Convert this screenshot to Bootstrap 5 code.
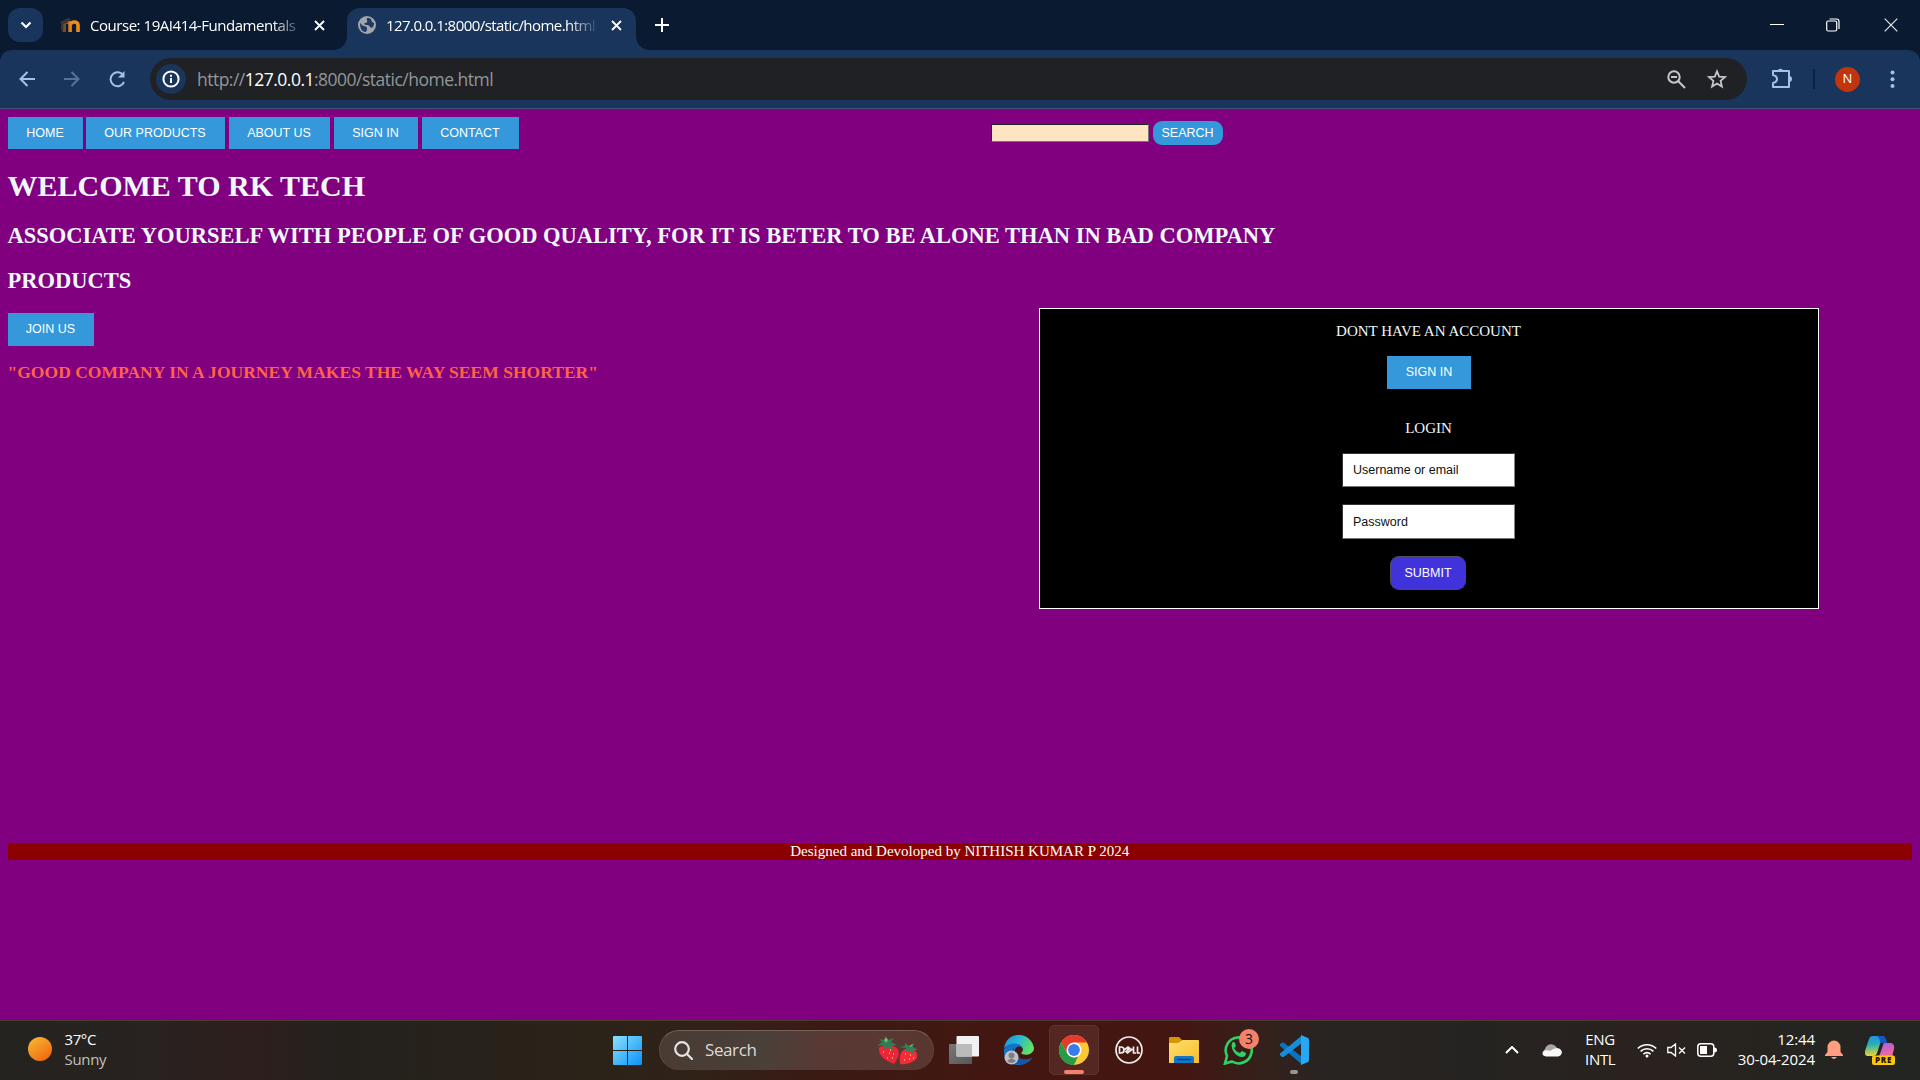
<!DOCTYPE html>
<html lang="en">
<head>
<meta charset="utf-8">
<title>RK Tech</title>
<link href="https://cdn.jsdelivr.net/npm/bootstrap@5.3.0/dist/css/bootstrap.min.css" rel="stylesheet">
<style>
body{width:1920px;height:1080px;overflow:hidden;font-family:"Open Sans","Noto Sans",sans-serif;background:#800080}
svg{display:block;flex:none}
.tabstrip{height:50px;background:#0a1a31;color:#fff;font-size:15px;padding-left:8px}
.tabsearch{width:35px;height:34px;border-radius:12px;background:#1a355b}
.tabtitle{white-space:nowrap;overflow:hidden;line-height:24px}
.t-course{width:208px;margin-left:8px;letter-spacing:-.46px;-webkit-mask-image:linear-gradient(90deg,#000 182px,transparent 215px)}
.t-home{width:210px;margin-left:10px;letter-spacing:-.56px;-webkit-mask-image:linear-gradient(90deg,#000 182px,transparent 213px)}
.tab-live{width:289px;height:42px;margin-left:22px;background:#1a355b;border-radius:13px 13px 0 0;position:relative;padding-left:11px}
.tab-live::before,.tab-live::after{content:"";position:absolute;bottom:0;width:13px;height:13px}
.tab-live::before{left:-13px;background:radial-gradient(circle at 0 0,transparent 12.5px,#1a355b 13px)}
.tab-live::after{right:-13px;background:radial-gradient(circle at 100% 0,transparent 12.5px,#1a355b 13px)}
.toolwrap{background:#0a1a31}
.tools{height:59px;background:#1a355b;border-bottom:1px solid #3b5474;border-radius:12px 12px 0 0}
.omni{width:1597px;height:42px;border-radius:21px;background:#202124;margin-left:24px;padding-left:6px}
.infodot{width:30px;height:30px;background:#1a355b}
.urltext{margin-left:11px;font-size:17.5px;color:#93969a;letter-spacing:-.51px;white-space:nowrap}
.urltext b{font-weight:400;color:#fff}
.avatar{width:25px;height:25px;background:#c1350e;color:#fff;font-size:13px;margin-left:20px}
.site{height:911px;padding:8px 8px 0 7.5px;font-family:"Liberation Serif",serif;color:#f0f8ff;font-size:15px}
.site h1,.site h2,.site h3{font-weight:700;margin:0;white-space:nowrap;line-height:1}
.navline{height:32px}
.sans{font-family:"Liberation Sans",Arial,sans-serif;font-size:12.5px;line-height:14px;color:#fff;white-space:nowrap}
.bluebtn{background:#3498db;border:0;border-radius:0;text-align:center;padding:9px 0}
.findbox{width:158px;height:18px;background:#ffe4c4;border:1px solid;border-color:#222 #767676 #767676 #222;margin:7px 0 0 472px}
.findbtn{width:70px;height:24px;background:#3498db;border-radius:9px;margin-left:4px;border:0;padding:0;line-height:22px}
.loginbox{width:780px;height:301px;background:#000;border:1px solid #fff;margin:-5px 93px 0 0}
.loginbox .cap{line-height:17px}
.field{width:173px;border:1px solid;border-color:#333 #858585 #767676 #333;background:#fff;color:#000;padding:0 10px;display:block;margin-right:1px}
.field::placeholder{color:#111;opacity:1}
.submit{width:76px;height:34px;border-radius:9px;border:1px solid;border-color:#50505c #4133dc #4133dc #50505c;background:#4133dc;padding:0;margin-right:2px}
.credit{background:#8b0000;height:17px;line-height:16px;color:#fff}
.taskbar{height:60px;border-top:1px solid #4a3a32;background:linear-gradient(90deg,#24231f 0,#282220 150px,#2d1f1d 250px,#24211d 340px,#2b2318 600px,#302218 690px,#3b1a14 820px,#431711 1000px,#431612 1180px,#35201b 1260px,#292421 1325px,#252321 1480px,#2a221e 1650px,#252420 1800px,#222522 1920px);color:#fff;font-size:15px;line-height:20px;padding-bottom:1px}
.up{margin-top:-3px}
.weather{padding-left:28px;width:613px}
.findpill{width:275px;height:40px;border-radius:20px;margin-left:17px;padding-left:14px;border:1px solid #70504a;border-color:#76605a #62433d #553c36 #594b42;background:linear-gradient(90deg,#4a3b32,#49403a 35%,#583934 60%,#5b3631);font-size:17px;color:#dedad8}
.running{width:50px;height:50px;background:#552723;border:1px solid #60332e;border-radius:5px;position:relative;margin-left:15px}
.bar{position:absolute;height:4px;border-radius:2px;background:#f4816a}
.note{position:absolute;width:20px;height:20px;background:#f4816a;color:#111;left:16px;top:-6px;font-size:14px}
</style>
<script src="https://cdn.jsdelivr.net/npm/bootstrap@5.3.0/dist/js/bootstrap.bundle.min.js"></script>
</head>
<body>
<header>
<div class="tabstrip d-flex align-items-center position-relative">
  <div class="tabsearch d-flex align-items-center justify-content-center"><svg width="12" height="8" fill="none" stroke="#fff" stroke-width="2.2"><path d="M1.5 1.5 6 6l4.500-4.500"/></svg></div>
  <svg style="margin-left:17px" width="22" height="16" viewBox="0 0 22 16"><defs><linearGradient id="md" gradientUnits="userSpaceOnUse" x1="2" x2="11"><stop stop-color="#4a3630"/><stop offset="1" stop-color="#f08a1d"/></linearGradient></defs><path d="M4 15V8c0-4 6-4 6 0v7M10.500 8c0-4 7.500-4 7.500 0v7" fill="none" stroke="url(#md)" stroke-width="3.600"/><path d="M0 5 8 1l3 1-4 4-4 1v6H1V6z" fill="#3b3434"/></svg>
  <div class="tabtitle t-course">Course: 19AI414-Fundamentals</div>
  <svg style="margin-left:16px" width="11" height="11" stroke="#fff" stroke-width="1.800"><path d="m1 1 9 9m0-9-9 9"/></svg>
  <div class="tab-live d-flex align-items-center align-self-end">
    <div class="d-flex align-items-center" style="margin-top:-8px">
    <svg width="18" height="18" viewBox="0 0 18 18"><circle cx="9" cy="9" r="9" fill="#a1a6ad"/><path d="M2 7c2 1 2 3 4 3s3 1 3 3-1 2-1 3C4 16 2 13 2 7zM9 2c-1 2 1 2 0 4s-2 0-3 2l2 1c2 0 3 0 4 2l2 1c2-2 2-4 2-5l-2-1-1-3-2-1z" fill="#223b60"/></svg>
    <div class="tabtitle t-home">127.0.0.1:8000/static/home.html</div>
    <svg style="margin-left:15px" width="11" height="11" stroke="#fff" stroke-width="1.800"><path d="m1 1 9 9m0-9-9 9"/></svg>
    </div>
  </div>
  <svg style="margin-left:19px" width="14" height="14" stroke="#fff" stroke-width="2"><path d="M7 0v14M0 7h14"/></svg>
  <div class="d-flex align-items-center ms-auto" style="padding-right:22px">
    <svg width="14" height="14" stroke="#fff"><path d="M0 6.500h14"/></svg>
    <svg style="margin-left:42px" width="14" height="14" fill="none" stroke="#fff" stroke-width="1.200"><rect x=".7" y="3" width="10" height="10" rx="1.500"/><path d="M3.500 1h7q2.500 0 2.500 2.500V11"/></svg>
    <svg style="margin-left:44px" width="14" height="14" stroke="#e4e7ec" stroke-width="1.200"><path d="m.7.700 12.600 12.600m0-12.600L.7 13.300"/></svg>
  </div>
</div>
<div class="toolwrap">
<div class="tools d-flex align-items-center">
  <svg style="margin-left:19px" width="16" height="16" fill="none" stroke="#a8c0e8" stroke-width="2"><path d="M16 8H2M8.500 1 1.500 8l7 7"/></svg>
  <svg style="margin-left:29px" width="16" height="16" fill="none" stroke="#57719a" stroke-width="2"><path d="M0 8h14M7.500 1l7 7-7 7"/></svg>
  <svg style="margin-left:29px" width="17" height="17" fill="none" stroke="#a8c0e8" stroke-width="2"><path d="M14.500 4.500A7 7 0 1 0 15 11"/><path d="M15.500 0v6.500H9z" fill="#a8c0e8" stroke="none"/></svg>
  <div class="omni d-flex align-items-center">
    <div class="infodot rounded-circle d-flex align-items-center justify-content-center"><svg width="18" height="18" fill="none" stroke="#fff" stroke-width="2"><circle cx="9" cy="9" r="7.600"/><path d="M9 8v5M9 4.700v2"/></svg></div>
    <div class="urltext">http://<b>127.0.0.1</b>:8000/static/home.html</div>
    <svg class="ms-auto" width="19" height="19" fill="none" stroke="#c4c7cb" stroke-width="2"><circle cx="7" cy="7" r="5.700"/><path d="m11 11 7 7M4 7h6"/></svg>
    <svg style="margin:0 20px 0 21px" width="20" height="20" viewBox="0 0 20 20" fill="none" stroke="#c4c7cb" stroke-width="1.800"><path d="m10 2.300 2.200 5.300 5.800.5-4.400 3.800 1.300 5.700-4.900-3-4.900 3 1.300-5.700L2 8.100l5.800-.5z"/></svg>
  </div>
  <svg style="margin:-2px 0 0 24px" width="22" height="22" viewBox="0 0 22 22" fill="none" stroke="#a8c0e8" stroke-width="2"><path d="M2 4h16v16H2v-4q4-1 4-4T2 8z" stroke-linejoin="round"/><path d="M6.500 4a3 3 0 0 1 5.800 0zM18 9a3 3 0 0 1 0 6z" fill="#a8c0e8" stroke="none"/></svg>
  <svg style="margin-left:20px" width="2" height="20"><path d="M1 0v20" stroke="#0b2142" stroke-width="2"/></svg>
  <div class="avatar rounded-circle d-flex align-items-center justify-content-center">N</div>
  <svg style="margin-left:30px" width="5" height="18" fill="#a8c0e8"><circle cx="2.500" cy="2.500" r="2"/><circle cx="2.500" cy="9.300" r="2"/><circle cx="2.500" cy="16" r="2"/></svg>
</div>
</div>
</header>

<main class="site">
  <nav class="navline d-flex">
    <div class="bluebtn sans" style="width:75px">HOME</div>
    <div class="bluebtn sans" style="width:139px;margin-left:3px">OUR PRODUCTS</div>
    <div class="bluebtn sans" style="width:101px;margin-left:4px">ABOUT US</div>
    <div class="bluebtn sans" style="width:84px;margin-left:4px">SIGN IN</div>
    <div class="bluebtn sans" style="width:97px;margin-left:4px">CONTACT</div>
    <div class="findbox"></div>
    <button class="findbtn sans mt-1">SEARCH</button>
  </nav>
  <h1 style="font-size:30px;padding-top:22px">WELCOME TO RK TECH</h1>
  <h2 style="font-size:22.5px;padding-top:24px">ASSOCIATE YOURSELF WITH PEOPLE OF GOOD QUALITY, FOR IT IS BETER TO BE ALONE THAN IN BAD COMPANY</h2>
  <h2 style="font-size:22.5px;padding-top:22px">PRODUCTS</h2>
  <div class="d-flex justify-content-between" style="height:551px;padding-top:21px">
    <div>
      <div class="bluebtn sans" style="width:86px;height:33px">JOIN US</div>
      <h3 style="font-size:17.55px;margin-top:18px;color:#ff6347">"GOOD COMPANY IN A JOURNEY MAKES THE WAY SEEM SHORTER"</h3>
    </div>
    <section class="loginbox d-flex flex-column align-items-center">
      <div class="cap" style="margin-top:14px;padding-right:1px">DONT HAVE AN ACCOUNT</div>
      <div class="bluebtn sans" style="width:84px;height:33px;margin-top:16px">SIGN IN</div>
      <div class="cap" style="margin-top:31px;padding-right:1px">LOGIN</div>
      <input class="field sans" style="height:34px;margin-top:16px" placeholder="Username or email">
      <input class="field sans" style="height:35px;margin-top:17px" placeholder="Password">
      <button class="submit sans" style="margin-top:17px">SUBMIT</button>
    </section>
  </div>
  <footer class="credit text-center">Designed and Devoloped by NITHISH KUMAR P 2024</footer>
</main>

<div class="taskbar d-flex align-items-center">
  <div class="weather d-flex align-items-center up">
    <svg width="24" height="24"><defs><linearGradient id="sun" x2=".7" y2="1"><stop stop-color="#f7bd35"/><stop offset="1" stop-color="#f06a10"/></linearGradient></defs><circle cx="12" cy="12" r="12" fill="url(#sun)"/></svg>
    <div style="margin-left:12.5px;letter-spacing:-.4px">37°C<br><span style="color:#c3c1bf;letter-spacing:-.3px">Sunny</span></div>
  </div>
  <svg width="29" height="29"><defs><linearGradient id="win" gradientUnits="userSpaceOnUse" x2="29" y2="29"><stop stop-color="#8be0ff"/><stop offset="1" stop-color="#0a93f5"/></linearGradient></defs><path d="M0 1q0-1 1-1h13v14H0zM15 0h13q1 0 1 1v13H15zM0 15h14v14H1q-1 0-1-1zM15 15h14v13q0 1-1 1H15z" fill="url(#win)"/></svg>
  <div class="findpill d-flex align-items-center">
    <svg width="19" height="19" fill="none" stroke="#e6e4e3" stroke-width="2.200" stroke-linecap="round"><circle cx="8" cy="8" r="6.800"/><path d="m13 13 5 5"/></svg>
    <span style="margin-left:12px;letter-spacing:-.4px">Search</span>
    <svg class="ms-auto" style="margin-right:14px" width="42" height="29" viewBox="0 0 42 29"><path d="M2 12C1 20 9 25 17 28c4-5 6-10 4-14C19 9 6 7 2 12z" fill="#ed2637"/><path d="M24 17c-2 4-1 8-1 11 6 1 13-1 17-6 1-5-2-9-6-9-4-1-8 0-10 4z" fill="#f32b3a"/><path d="M0 10 5 6 2 3l6 1 0-4 3 4 6-2-3 4 6 3-5 1 1 5-5-4-5 3 0-5z" fill="#2f7d55"/><path d="m22 11 6-1 0-3 4 3 5-3-1 4 5 3-5 0 2 5-5-4-4 1 0-4z" fill="#35805a"/><path d="M7 4 9 1l2 3-2 3zM32 10l4-2-2 3z" fill="#70bd5b"/><path d="M6 16h1m5 1h1m3 1h1m-7 4h1m4 0h1m-3-8h1M28 18h1m4 1h1m-7 5h1m4-1h1m3-1h1" stroke="#ffca68" stroke-width="1.600"/></svg>
  </div>
  <svg style="margin-left:15px" width="30" height="28" viewBox="0 0 30 28"><defs><linearGradient id="tv" y2="1"><stop stop-color="#777"/><stop offset="1" stop-color="#585858"/></linearGradient></defs><rect y="8" width="23" height="20" rx="1" fill="url(#tv)"/><rect x="7.500" width="22.500" height="20.500" rx="1" fill="#f1f1f1"/><path d="M7.500 8H23v12.500H7.500z" fill="#bbb"/></svg>
  <svg style="margin-left:25px" width="30" height="30" viewBox="0 0 30 30"><defs><linearGradient id="eg" x2="1" y2=".4"><stop stop-color="#168ce0"/><stop offset=".5" stop-color="#25b8d5"/><stop offset="1" stop-color="#62df62"/></linearGradient></defs><path d="M0 13C3-5 27-4 30 13c0 6-7 8-12 6-2-1 1-2 1-5-2-6-13-6-19-1z" fill="url(#eg)"/><path d="M0 14C5 7 15 7 18 12c-6-2-9 3-6 8 3 6 10 6 16 3-8 12-30 8-28-9z" fill="#1273c9"/><path d="M11 12c-4 8 4 15 17 11-5 7-12 8-18 5-6-5-4-12 1-16z" fill="#1556a6"/><circle cx="7.500" cy="22.500" r="7" fill="#bfc1c3"/><circle cx="7.500" cy="20.500" r="3" fill="#7d7f81"/><path d="M3 26q4.500-5 9 0-4.500 4-9 0z" fill="#7d7f81"/></svg>
  <div class="running d-flex align-items-center justify-content-center">
    <svg width="30" height="30" viewBox="-15 -15 30 30"><circle r="15" fill="#fcc934"/><path d="M-13-7.500A15 15 0 0 1 13-7.500H0l-6.500 11z" fill="#e33b2e"/><path d="M-13-7.500-6.500 3.750 0 7.500l4-1L0 15A15 15 0 0 1-13-7.500z" fill="#269b48"/><circle r="7.500" fill="#fff"/><circle r="5.900" fill="#397be8"/></svg>
    <span class="bar" style="left:14px;top:44px;width:20px"></span>
  </div>
  <svg style="margin-left:16px" width="28" height="28" viewBox="0 0 28 28" fill="none" stroke="#f3eeee" stroke-width="1.700"><circle cx="14" cy="14" r="13"/><path d="M4.500 11v6h1.500q3 0 3-3t-3-3zM9 14l4-3 2 1.600-4 3 1.500 1.400 5-4M18.500 10.500V17H21M22.500 10.500V17H25M12 14l3-2"/></svg>
  <svg style="margin-left:26px" width="30" height="27" viewBox="0 0 30 27"><defs><linearGradient id="fd" y2="1"><stop stop-color="#ffdf70"/><stop offset="1" stop-color="#f9bd28"/></linearGradient></defs><path d="M0 1q0-1 1-1h9l3 3h-1v7H0z" fill="#d79600"/><path d="M0 6h9l4-3h16q1 0 1 1v22H0z" fill="url(#fd)"/><path d="M5 26v-5q0-2 2-2h16q2 0 2 2v5z" fill="#1576c6"/><path d="M8 22.500h14" stroke="#084980" stroke-width="1.400"/></svg>
  <div class="position-relative" style="margin-left:24px">
    <svg width="31" height="30" viewBox="0 0 31 30"><path d="M2 28.500 4 21A13 13 0 1 1 9 26.500z" fill="none" stroke="#2bd365" stroke-width="2.600"/><path d="M9 8q2-2 3 0l1 3-2 2q2 4 6 5l2-2 4 2q0 4-4 4C13 22 7 14 9 8z" fill="#2bd365"/></svg>
    <span class="note rounded-circle d-flex align-items-center justify-content-center">3</span>
  </div>
  <div class="position-relative" style="margin-left:25px">
    <svg width="30" height="30" viewBox="0 0 30 30"><path d="m1 9 2-1.500h1.500L23 22v7.500L1 11z" fill="#0b73bd"/><path d="m1 20 2 2h1.500L23 8V.5L1 18.500z" fill="#168fda"/><path d="m22 0 7 3q1 .5 1 2v20q0 1.500-1 2l-7 3z" fill="#27a9f2"/></svg>
    <span class="bar" style="left:11px;top:35px;width:8px;background:#9b9493"></span>
  </div>
  <div class="d-flex align-items-center ms-auto" style="padding-right:25px">
    <svg width="14" height="8" fill="none" stroke="#fff" stroke-width="2"><path d="m1 7 6-6 6 6"/></svg>
    <svg style="margin-left:23px" width="20" height="13"><path d="M4 12a4 4 0 0 1-1-7C5-1 12-1 15 4c5 0 6 7 2 8z" fill="#a8a6a5"/><path d="M4 12.500c-4 0-5-5-1-6 3-1 4 1 6 0s4-3 7-2c6 1 4 8 0 8z" fill="#f8f8f8"/></svg>
    <div class="text-center up" style="margin-left:23px;width:30px;letter-spacing:-.3px">ENG<br>INTL</div>
    <svg style="margin-left:22px" width="20" height="15" viewBox="0 0 20 15" fill="none" stroke="#fff" stroke-width="1.600"><path d="M.8 5.500a13 13 0 0 1 18.400 0M3.600 8.400a9 9 0 0 1 12.800 0M6.400 11.200a5 5 0 0 1 7.200 0"/><circle cx="10" cy="13" r="1.500" fill="#fff" stroke="none"/></svg>
    <svg style="margin-left:10px" width="20" height="14" fill="none" stroke="#fff" stroke-width="1.300"><path d="M.8 4.500H4L8.500 1v12L4 9.500H.8zM12 4.500l6 6m0-6-6 6"/></svg>
    <svg style="margin-left:10px" width="20" height="14"><rect x=".8" y=".8" width="16" height="12.400" rx="3" fill="none" stroke="#fff" stroke-width="1.500"/><path d="M3 3h7v8H3zM17 4.500q3 0 3 2.500t-3 2.500z" fill="#fff"/></svg>
    <div class="text-end up" style="margin-left:18px;width:80px;letter-spacing:-.1px;white-space:nowrap">12:44<br>30-04-2024</div>
    <svg style="margin-left:10px" width="18" height="20"><path d="M2.500 7a6.500 6.500 0 0 1 13 0v5L18 15v1H0v-1l2.500-3zM6 17h6q-3 4-6 0z" fill="#ff9f80"/></svg>
    <svg style="margin-left:22px" width="30" height="29" viewBox="0 0 30 29"><defs><linearGradient id="cp" x2=".1" y2="1"><stop stop-color="#258dec"/><stop offset=".45" stop-color="#23b0b4"/><stop offset="1" stop-color="#e9d334"/></linearGradient><linearGradient id="cq" x2=".4" y2="1"><stop stop-color="#a45de8"/><stop offset="1" stop-color="#f5689a"/></linearGradient></defs><path d="M7 0h10q3 0 3 3-4 0-5 5l-3 9q-1 3-4 3H2q-3-1-2-5L4 3q1-3 3-3z" fill="url(#cp)"/><path d="M14 0h4q3 0 4 7h-7q0-5-3-7z" fill="#1755c2"/><path d="M20 7h6q4 1 3 6l-2 8H11q3 0 4-3l3-9q0-2 2-2z" fill="url(#cq)"/><rect x="7" y="19.500" width="23" height="9.500" rx="2" fill="#ffc60a"/><text x="18.500" y="27.300" text-anchor="middle" font-family="Open Sans" font-weight="800" font-size="8" letter-spacing=".7" fill="#1b1500">PRE</text></svg>
  </div>
</div>
</body>
</html>
